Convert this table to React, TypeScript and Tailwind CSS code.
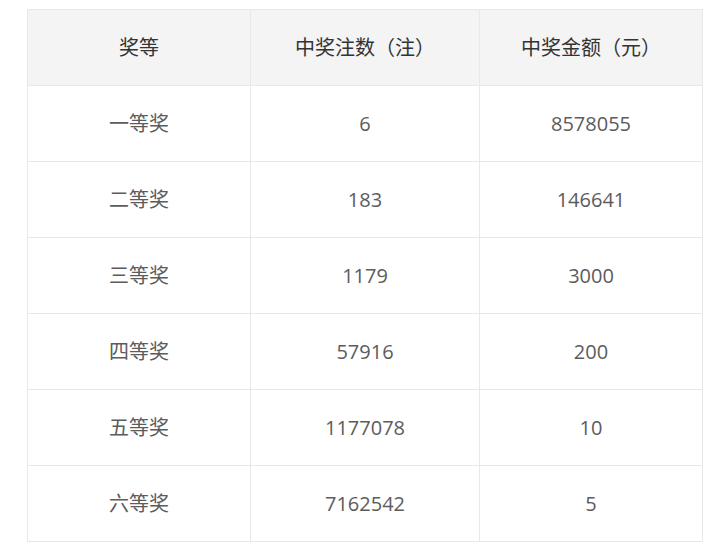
const rows: [string, string, string][] = [
  ['一等奖', '6', '8578055'],
  ['二等奖', '183', '146641'],
  ['三等奖', '1179', '3000'],
  ['四等奖', '57916', '200'],
  ['五等奖', '1177078', '10'],
  ['六等奖', '7162542', '5'],
];

export default function App() {
  return (
    <div
      className="min-h-[551px] bg-white pl-[27px] pt-[9px]"
      style={{ fontFamily: '"Open Sans", "Noto Sans CJK SC", sans-serif' }}
    >
      <table className="w-[675px] table-fixed border-collapse border border-[#e8e8e8] text-[20px]">
        <colgroup>
          <col className="w-[223px]" />
          <col className="w-[229px]" />
          <col className="w-[223px]" />
        </colgroup>
        <thead>
          <tr className="h-[76px] bg-[#f4f4f4] text-[#333]">
            <th className="border border-[#e8e8e8] font-normal">奖等</th>
            <th className="border border-[#e8e8e8] font-normal">中奖注数（注）</th>
            <th className="border border-[#e8e8e8] font-normal">中奖金额（元）</th>
          </tr>
        </thead>
        <tbody className="text-[#5c5c5c]">
          {rows.map(([level, count, amount]) => (
            <tr key={level} className="h-[76px]">
              <td className="border border-[#e8e8e8] text-center">{level}</td>
              <td className="border border-[#e8e8e8] text-center">{count}</td>
              <td className="border border-[#e8e8e8] text-center">{amount}</td>
            </tr>
          ))}
        </tbody>
      </table>
    </div>
  );
}
